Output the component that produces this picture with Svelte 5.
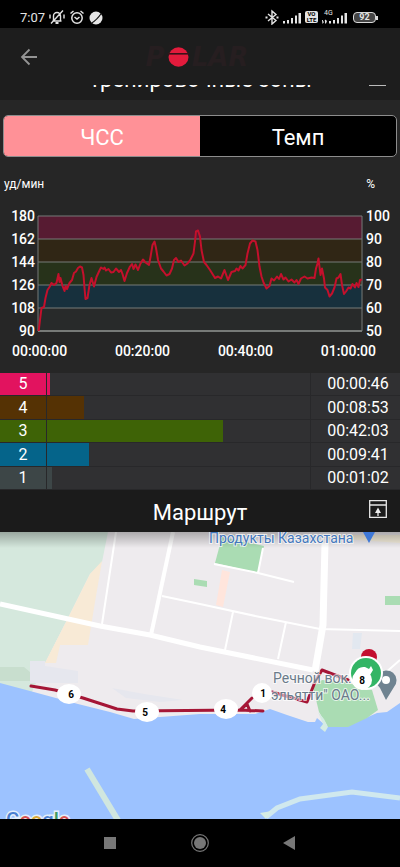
<script lang="ts">
  type Mode = 'hr' | 'pace';

  let mode = $state<Mode>('hr');

  const bpm = [180, 162, 144, 126, 108, 90];
  const percents = [100, 90, 80, 70, 60, 50];
  const times = ['00:00:00', '00:20:00', '00:40:00', '01:00:00'];

  const bands = ['#571b32', '#302615', '#27321a', '#17303d', '#282a2a'];

  const zones = [
    { id: 5, time: '00:00:46', share: 1, color: '#e2135f' },
    { id: 4, time: '00:08:53', share: 14, color: '#553204' },
    { id: 3, time: '00:42:03', share: 67, color: '#3e6306' },
    { id: 2, time: '00:09:41', share: 16, color: '#05648a' },
    { id: 1, time: '00:01:02', share: 2, color: '#3d4647' }
  ];

  // heart rate curve, in units of the 324 x 115 plot
  const curve =
    '0.7,115 2,104 3.5,92 6,91 7.5,82 9.5,74 11.5,71 13.5,67 16,69 18.5,67 20.5,58 21.5,66 22.5,62 24.5,70 26.5,75 27.5,70 29,73 31.5,67 34,64 36,57 38,55.5 40,52 42,50.5 44,51.5 45.5,59 46.5,72 47.5,83 49.5,82 51.5,69 53.5,62 56,70.5 58.5,61 61,55.5 63,51.5 65.5,53 66.5,51.5 68,54.5 70.5,53 73,56.5 75.5,56 78,52.5 81,56 83,54 84.5,58 86.5,65 89,57 92,50.5 94,48 95.5,53 97.5,48.5 100,54 102.5,47.5 105,43.5 107.5,46.5 111,49 112.5,41 114.5,29 116.5,25.5 118,32 120,44 123,52.5 125.5,55.5 128.5,59.5 131.5,58 134,52.5 136,44 138,42 140.5,46 143,44.5 146.5,49.5 149.5,47.5 152.5,43.5 155.5,37.5 157,25.5 158,15.5 160,14.5 162,20.5 163.5,34 166,46 168.5,49 172,54 177,62 180,60.5 183,62.5 186.5,54 190,64 193.5,56 197,55 198.5,52.5 200.5,54.5 202.5,50 204.5,52.5 207.5,49 209.5,37.5 212,27.5 214.5,24.5 217.5,25.5 219.5,34 221.5,50.5 223.5,60.5 225.5,66.5 228.5,72.5 231.5,70 233.5,62.5 236,64.5 239,60.5 241,63 243,58 245.5,63.5 247.5,61.5 250.5,65.5 253.5,63.5 256.5,66.5 258.5,64 260.5,68 263,62.5 266.5,60.5 269.5,62.5 273.5,61.5 276.5,62 278,52.5 279.5,47.5 280.5,42.5 282.5,59 284,52.5 286,62.5 287,71.5 289.5,74 291.5,80.5 294,77.5 296.5,71.5 298.5,62.5 300.5,61.5 302.5,58 304,69 306,78 308,75.5 310.5,71.5 312.5,72.5 314.5,68 317,71.5 318.5,67 320.5,71 322,64 324,63.5';

  const markers = [
    { km: 6, x: 69, y: 162, rx: 12, tx: 71 },
    { km: 5, x: 147, y: 180, rx: 12, tx: 145 },
    { km: 4, x: 226, y: 177, rx: 12, tx: 223 },
    { km: 1, x: 262, y: 161, rx: 10, tx: 263 },
    { km: 8, x: 362, y: 148, rx: 10, tx: 362 }
  ];
</script>

<div class="screen">
  <div class="status">
    <div class="status-left">
      <span class="clock">7:07</span>
      <svg width="16" height="16" viewBox="0 0 16 16" fill="none" stroke="#e4e4e4" stroke-width="1.4">
        <path d="M3.5 12h9M4.5 11.5V7a3.5 3.5 0 0 1 7 0v4.500M2 14.500 14 1.500M1 5.500v4M15 5.500v4" />
        <path d="M6.500 14h3" stroke-width="2" />
      </svg>
      <svg width="16" height="16" viewBox="0 0 16 16" fill="none" stroke="#e4e4e4" stroke-width="1.500">
        <circle cx="8" cy="9" r="5.200" />
        <path d="M1.500 4.500 4.500 2M14.500 4.500 11.500 2M5.500 8 8 10l2.500-2" />
      </svg>
      <svg width="14" height="16" viewBox="0 0 14 16">
        <circle cx="7" cy="9" r="6.500" fill="#e6e6e6" />
        <path d="M2 14.500Q8 11 12.500 4" stroke="#111" stroke-width="1.200" fill="none" />
      </svg>
    </div>
    <div class="status-right">
      <svg width="14" height="16" viewBox="0 0 14 16" fill="none" stroke="#e4e4e4" stroke-width="1.400">
        <path d="M3 5l8 6.500-4 3.500V2l4 3.500L3 12" />
        <path d="M.5 8.500h2M11.500 8.500h2" stroke-width="2" />
      </svg>
      <svg width="18" height="16" viewBox="0 0 18 16" fill="#e4e4e4">
        <path d="M0 12h2v2.500H0zM4 11h2v3.500H4zM8 9h2v5.500H8zM12 6.500h2v8h-2zM15.500 4H18v10.500h-2.500z" />
      </svg>
      <span class="volte"><span>VO</span><span>LTE</span></span>
      <svg width="25" height="16" viewBox="0 0 25 16" fill="#e4e4e4">
        <text x="2" y="6" font-family="Roboto" font-size="7">4G</text>
        <path d="M0 11h1v2l1-1v1l-1.500 2zM4 14.500h-1v-3l-1 1 1.500-2L5 12zM7 12h2v2.500H7zM11 11h2v3.500h-2zM15 9h2v5.500h-2zM19 6.500h2v8h-2zM22.500 4H25v10.500h-2.500z" />
      </svg>
      <span class="battery">92</span>
    </div>
  </div>

  <header class="appbar">
    <button class="back" aria-label="Назад">
      <svg width="18" height="18" viewBox="0 0 18 18" fill="none" stroke="#949494" stroke-width="1.800">
        <path d="M17 9H2M9.500 1.500 2 9l7.500 7.500" />
      </svg>
    </button>
    <div class="logo">
      <span>P</span>
      <svg width="21" height="20" viewBox="0 0 21 20">
        <ellipse cx="10.500" cy="10" rx="10" ry="9.700" fill="#e31b3c" />
        <path d="M0 6.800h21" stroke="#3a1219" stroke-width="1.600" />
      </svg>
      <span>LAR</span>
    </div>
  </header>

  <div class="cut-title">
    <h2>Тренировочные зоны</h2>
    <i></i>
  </div>

  <div class="tabs">
    <button class:active={mode === 'hr'} onclick={() => (mode = 'hr')}>ЧСС</button>
    <button class:active={mode === 'pace'} onclick={() => (mode = 'pace')}>Темп</button>
  </div>

  <div class="units"><span>уд/мин</span><span>%</span></div>

  <div class="chart">
    <div class="axis left">
      {#each bpm as v}<span>{v}</span>{/each}
    </div>
    <svg class="plot" viewBox="0 0 324 115" preserveAspectRatio="none">
      {#each bands as fill, i}
        <rect x="0" y={i * 23} width="324" height="23" {fill} />
      {/each}
      {#each bpm as _, i}
        <path d="M0 {i * 23}H324" stroke="#777a78" stroke-width={i === 5 ? 2 : 1} />
      {/each}
      <path d="M0 0V115M324 0V115" stroke="#777a78" />
      <polyline points={curve} fill="none" stroke="#c4102c" stroke-width="2" stroke-linejoin="round" />
    </svg>
    <div class="axis right">
      {#each percents as v}<span>{v}</span>{/each}
    </div>
  </div>
  <div class="times">
    {#each times as t}<span>{t}</span>{/each}
  </div>

  <table class="zones">
    <tbody>
      {#each zones as z (z.id)}
        <tr>
          <th scope="row" style="background: {z.color}">{z.id}</th>
          <td><div class="bar" style="width: {z.share}%; background: {z.color}"></div></td>
          <td class="time">{z.time}</td>
        </tr>
      {/each}
    </tbody>
  </table>

  <div class="route-head">
    <h2>Маршрут</h2>
    <button aria-label="Развернуть карту">
      <svg width="18" height="18" viewBox="0 0 18 18" fill="none" stroke="#e8e8e8" stroke-width="1.300">
        <path d="M.7.7h16.600v16.600H.7zM.7 5h16.600M9 16V9" />
        <path d="M6 13 9 7.500l3 5.500z" fill="#e8e8e8" stroke="none" />
      </svg>
    </button>
  </div>

  <svg class="map" viewBox="0 0 400 287" preserveAspectRatio="xMidYMid slice">
    <defs>
      <linearGradient id="shade" x1="0" y1="0" x2="0" y2="1">
        <stop offset="0" stop-color="#000" stop-opacity=".28" />
        <stop offset="1" stop-color="#000" stop-opacity="0" />
      </linearGradient>
    </defs>
    <rect width="400" height="287" fill="#eeebee" />

    <!-- parks, beach, blocks -->
    <path d="M0 0H108L102 30 90 42 70 82 45 131 31 162H0z" fill="#d5e8dd" />
    <path d="M102 29 90 42 66 90 45 131H56L60 113H88L95 70z" fill="#f8ead6" />
    <path d="M0 135H24L30 140V149H0z" fill="#c8dece" />
    <path d="M30 129H45V134L78 139V151H30z" fill="#e6e7ee" />
    <path d="M112 156 144 162 183 168 160 170 126 166z" fill="#e6e7ee" />
    <path d="M222 5 264 14 258 41 215 31z" fill="#aadcb3" />
    <path d="M222 38 230 40 223 75 216 73z" fill="#ffe5dc" />
    <path d="M194 47 207 49V55L194 53zM385 64H400V73H385z" fill="#aadcb3" />
    <path d="M353 101H362L360 117H352z" fill="#e2e8f0" />
    <path d="M330 3H400V11L330 6z" fill="#f5eedc" />

    <!-- water and piers -->
    <path d="M0 151 30 159 78 172 110 180 134 187 160 185 200 182 255 182 270 177 287 183 308 190 315 190 317 186 325 193 345 195 377 181 387 180 400 171V287H0z" fill="#9cc2ff" />
    <path d="M313 155 322 148 345 150 372 158 378 178 367 186 348 195 328 195 319 180z" fill="#aadcb3" />
    <path d="M318 180 324 187 328 195 325 200 320 196 323 192z" fill="#d5ece3" />
    <path d="M87 237 119 290" stroke="#d0e6df" stroke-width="6" />
    <path d="M266 285 277 276 300 267 352 260 400 266" fill="none" stroke="#d0e8ee" stroke-width="5" />
    <path d="M260 281 272 279 266 287z" fill="#d5ece3" />

    <!-- streets -->
    <g fill="none" stroke="#fff" stroke-width="2">
      <path d="M116 0 102 92M162 64 200 72 260 85 320 97 400 99M233 80 225 118M286 90 278 127M214 32 258 41 294 50M263 16 258 41M400 128 384 142" />
      <path d="M173 0 151 103" stroke-width="4" />
      <path d="M0 72 100 94 150 103 200 115 313 138" stroke-width="5" />
      <path d="M325 11 323 93 315 139" stroke-width="7" />
    </g>

    <rect width="400" height="16" fill="url(#shade)" />

    <g fill="none" stroke="#a51636" stroke-width="3" stroke-linejoin="round" stroke-linecap="round">
      <path d="M31 154 55 158 83 166 117 177 133 179 240 178 263 179M240 178 252 166M240 178 247 172 250 179M272 160 307 170 315 150 322 138 348 148" />
    </g>

    <g class="place">
      <text x="209" y="11" fill="#4478bd">Продукты Казахстана</text>
      <text x="273" y="151" fill="#6a7b8a">Речной вок.</text>
      <text x="271" y="168" fill="#6a7b8a">эльятти" ОАО...</text>
    </g>
    <path d="M363 0H375L369 11z" fill="#3f78d6" />

    <path d="M386 168 380 156A10 10 0 1 1 394 155z" fill="#6f8391" />
    <circle cx="386" cy="148" r="4" fill="#fff" />
    <circle cx="369" cy="125" r="8" fill="#c30f2f" />
    <circle cx="366" cy="141" r="17" fill="#fff" />
    <circle cx="366" cy="141" r="15" fill="#33b565" />
    <path d="M355 141Q358 134 365 135L369 137 371 134 373 138 370 143z" fill="#fff" />

    {#each markers as m}
      <ellipse cx={m.x} cy={m.y} rx={m.rx} ry="10" fill="#fff" />
      <text class="km" x={m.tx} y={m.y + 4}>{m.km}</text>
    {/each}

    <text class="google" x="6" y="295"><tspan fill="#4a7fd0">G</tspan><tspan fill="#d65353">o</tspan><tspan fill="#d8a93a">o</tspan><tspan fill="#4a7fd0">g</tspan><tspan fill="#3f9a62">l</tspan><tspan fill="#d65353">e</tspan></text>
  </svg>

  <nav class="system">
    <button aria-label="Недавние">
      <svg width="20" height="20" viewBox="0 0 20 20"><path d="M4 4h12v12H4z" fill="#777" /></svg>
    </button>
    <button aria-label="Домой">
      <svg width="20" height="20" viewBox="0 0 20 20">
        <circle cx="10" cy="10" r="8.300" fill="none" stroke="#777" stroke-width="1.200" />
        <circle cx="10" cy="10" r="6" fill="#777" />
      </svg>
    </button>
    <button aria-label="Назад">
      <svg width="20" height="20" viewBox="0 0 20 20"><path d="M15 3v14L3 10z" fill="#777" /></svg>
    </button>
  </nav>
</div>

<style>
  :global(body) {
    margin: 0;
    background: #000;
  }

  .screen {
    display: flex;
    flex-direction: column;
    min-height: 100vh;
    background: #262626;
    color: #fff;
    font-family: Roboto, 'Noto Sans', sans-serif;
  }

  button {
    padding: 0;
    border: 0;
    background: none;
    color: inherit;
    font-family: inherit;
    cursor: pointer;
  }

  h2 {
    margin: 0;
    font-size: 22px;
    font-weight: 400;
    line-height: 26px;
  }

  svg {
    display: block;
  }

  .status {
    display: flex;
    justify-content: space-between;
    align-items: center;
    height: 28px;
    padding: 6px 24px 0 20px;
    box-sizing: border-box;
    background: #000;
    color: #e4e4e4;
  }

  .status-left,
  .status-right {
    display: flex;
    align-items: center;
    gap: 4px;
  }

  .clock {
    font-size: 13px;
  }

  .volte {
    display: flex;
    flex-direction: column;
    align-items: center;
    width: 13px;
    border-radius: 2px;
    background: #e4e4e4;
    color: #000;
    font-size: 6px;
    font-weight: 700;
    line-height: 6px;
  }

  .battery {
    position: relative;
    margin-left: 2px;
    width: 21px;
    border: 1px solid #d8d8d8;
    border-radius: 4px;
    background: #444;
    font-size: 9px;
    font-weight: 700;
    line-height: 9px;
    text-align: center;
  }

  .battery::after {
    content: '';
    position: absolute;
    top: 3px;
    right: -3px;
    width: 2px;
    height: 4px;
    background: #d8d8d8;
  }

  .appbar {
    display: grid;
    grid-template-columns: 38px 1fr 38px;
    align-items: center;
    height: 57px;
    background: #1d1d1d;
  }

  .back {
    display: flex;
    justify-content: flex-end;
  }

  .logo {
    display: flex;
    justify-content: center;
    align-items: center;
    gap: 3px;
    padding-right: 6px;
    color: #261e20;
    font: italic 700 26px/26px 'DejaVu Sans', sans-serif;
  }

  .cut-title {
    display: grid;
    grid-template-columns: 31px 1fr 31px;
    grid-template-rows: 8px;
    align-items: end;
    height: 15px;
    box-sizing: border-box;
    overflow: hidden;
    background: #1d1d1d;
  }

  .cut-title h2 {
    grid-column: 2;
    text-align: center;
  }

  .cut-title i {
    align-self: start;
    width: 17px;
    height: 1px;
    background: #bbb;
  }

  .tabs {
    display: grid;
    grid-template-columns: 1fr 1fr;
    margin: 15px 3px 0;
    height: 42px;
    box-sizing: border-box;
    border: 1px solid #8d8d8d;
    border-radius: 5px;
    overflow: hidden;
    background: #000;
  }

  .tabs button {
    padding-top: 2px;
    font-size: 22px;
  }

  .tabs button.active {
    background: #ff9197;
  }

  .units {
    display: flex;
    justify-content: space-between;
    padding: 20px 25px 0 4px;
    font-size: 12px;
    line-height: 14px;
  }

  .chart {
    display: grid;
    grid-template-columns: 38px 1fr 38px;
    padding-top: 14px;
  }

  .axis {
    display: flex;
    flex-direction: column;
    font-size: 14px;
    font-weight: 500;
    line-height: 23px;
  }

  .axis.left {
    text-align: right;
    padding-right: 3px;
  }

  .axis.right {
    padding-left: 4px;
  }

  .plot {
    width: 100%;
    height: 115px;
    margin-top: 11px;
    overflow: visible;
  }

  .times {
    display: flex;
    justify-content: space-between;
    padding: 0 24px 14px 12px;
    font-size: 14px;
    font-weight: 500;
    line-height: 16px;
  }

  .zones {
    width: 100%;
    table-layout: fixed;
    border-spacing: 0;
    background: #303032;
    font-size: 16px;
  }

  .zones th,
  .zones td {
    height: 23px;
    padding: 0;
    box-sizing: border-box;
    border-bottom: 1px solid #28282a;
    line-height: 22px;
  }

  .zones tr:nth-child(even) > * {
    height: 24px;
  }

  .zones th {
    width: 47px;
    border-right: 1px solid #28282a;
    font-weight: 400;
  }

  .bar {
    height: 22px;
  }

  .zones tr:nth-child(even) .bar {
    height: 23px;
  }

  .zones .time {
    width: 90px;
    padding-left: 5px;
    border-left: 1px solid #28282a;
    text-align: center;
  }

  .route-head {
    display: grid;
    grid-template-columns: 31px 1fr 31px;
    align-items: center;
    height: 42px;
    background: #1b1b1b;
  }

  .route-head h2 {
    grid-column: 2;
    padding-top: 3px;
    text-align: center;
  }

  .route-head button {
    margin-bottom: 4px;
  }

  .map {
    width: 100%;
    flex: 1 0 287px;
    min-height: 0;
  }

  .place text {
    font-size: 14px;
    paint-order: stroke;
    stroke: #fff;
    stroke-width: 2px;
    stroke-opacity: 0.7;
  }

  .km {
    fill: #000;
    font-size: 10px;
    font-weight: 700;
    text-anchor: middle;
  }

  .google {
    font-size: 20px;
    font-weight: 500;
    paint-order: stroke;
    stroke: #e4eefa;
    stroke-width: 3px;
  }

  .system {
    display: flex;
    justify-content: center;
    align-items: center;
    gap: 70px;
    height: 48px;
    background: #000;
  }
</style>
